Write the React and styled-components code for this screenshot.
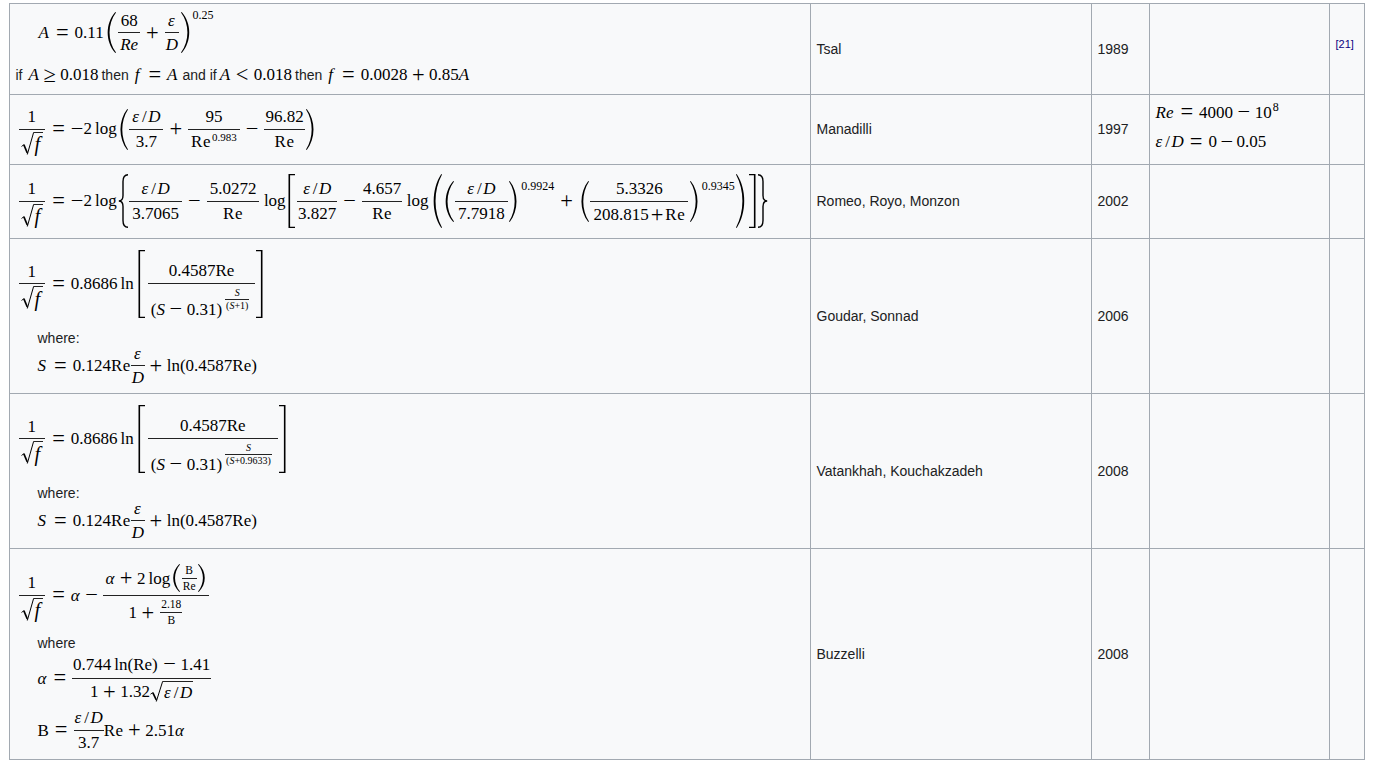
import styled, { createGlobalStyle } from "styled-components";

const GlobalStyle = createGlobalStyle`
  html, body {
    margin: 0;
    padding: 0;
    background: #fff;
    overflow: hidden;
  }
  body {
    font-family: "Liberation Sans", Arial, sans-serif;
    font-size: 14px;
    color: #202122;
  }
`;

const Page = styled.div`
  padding: 3px 9px 0;
  height: 758px;
  overflow: hidden;
`;

const Table = styled.table`
  border-collapse: collapse;
  table-layout: fixed;
  width: 1355px;
  background: #f8f9fa;
`;

const Row = styled.tr`
  height: ${(p) => p.$h}px;
`;

const Cell = styled.td`
  border: 1px solid #a2a9b1;
  padding: 0 5.5px 1px;
  vertical-align: middle;
  line-height: 20px;
  overflow: hidden;
  white-space: nowrap;
`;

const RefLink = styled.sup`
  display: block;
  color: #0b0080;
  font-size: 11px;
  line-height: 12px;
  margin-bottom: 10px;
`;

const Expr = styled.span`
  display: inline-flex;
  align-items: center;
  font-family: "Liberation Serif", "Times New Roman", serif;
  font-size: 17px;
  line-height: 1.15;
  color: #000;
  white-space: nowrap;
  vertical-align: middle;
  margin-left: ${(p) => p.$ml || 0}px;
`;

const Line = styled.div`
  display: flex;
  align-items: center;
  margin-top: ${(p) => p.$mt || 0}px;
  margin-bottom: ${(p) => p.$mb || 0}px;
  margin-left: ${(p) => (p.$indent ? 22 : 0)}px;
`;

const Note = styled.div`
  margin: ${(p) => p.$mt || 0}px 0 0 22px;
  line-height: 16px;
`;

const TextRun = styled.span`
  margin: 0 3px;
  vertical-align: middle;
`;

const V = styled.i`
  font-style: italic;
  margin: 0 ${(p) => p.$mr || 0}px 0 ${(p) => p.$ml || 0}px;
`;

const RootF = styled(V)`
  font-size: 1.2em;
  line-height: 1;
`;

const Roman = styled.span`
  letter-spacing: 0.5px;
`;

const Rel = styled.span`
  font-size: 1.32em;
  line-height: 1;
  margin: 0 ${(p) => p.$m ?? 6}px;
`;

const Bin = styled.span`
  font-size: 1.32em;
  line-height: 1;
  margin: 0 ${(p) => p.$m ?? 4.5}px;
`;

const Slash = styled.span`
  margin: 0 1.5px 0 2px;
`;

const Fn = styled.span`
  margin: 0 ${(p) => p.$mr ?? 1}px 0 ${(p) => p.$ml ?? 3}px;
`;

const FracGrid = styled.span`
  display: inline-grid;
  grid-template-rows: 1fr auto 1fr;
  justify-items: center;
  margin: ${(p) => p.$raise || 0}px ${(p) => p.$m ?? 1.5}px 0;
  font-size: ${(p) => (p.$size ? `${p.$size}px` : "inherit")};
  line-height: ${(p) => (p.$tight ? 1 : "inherit")};
`;

const Num = styled.span`
  display: inline-flex;
  align-items: center;
  align-self: end;
  padding: 0 ${(p) => p.$pad ?? 3}px ${(p) => p.$gap ?? 2}px;
`;

const Den = styled.span`
  display: inline-flex;
  align-items: center;
  align-self: start;
  padding: ${(p) => p.$gap ?? 2}px ${(p) => p.$pad ?? 3}px 0;
`;

const Bar = styled.span`
  justify-self: stretch;
  height: 1px;
  background: #222;
`;

const Sup = styled.span`
  align-self: flex-start;
  font-size: ${(p) => p.$size || 12}px;
  line-height: 1;
  margin: ${(p) => p.$mt || 0}px 0 0 ${(p) => p.$ml || 1}px;
`;

const DelimSvg = styled.svg`
  flex: none;
  display: block;
  margin: 0 ${(p) => p.$m ?? 0}px;
  transform: ${(p) => (p.$flip ? "scaleX(-1)" : "none")};
`;

const RootBody = styled.span`
  display: inline-flex;
  align-items: center;
  border-top: 1px solid #222;
  padding: 1px 1px 0 1px;
`;

const RootWrap = styled.span`
  display: inline-flex;
  align-items: stretch;
`;

// stretchy delimiters
function Delim({ kind, h, w, flip, m }) {
  let d;
  let stroke = false;
  if (kind === "paren") {
    d = `M${w - 0.7} 0C${0.2} ${h * 0.28} ${0.2} ${h * 0.72} ${w - 0.7} ${h}L${w} ${h - 0.5}C${2.4} ${h * 0.7} ${2.4} ${h * 0.3} ${w} 0.5Z`;
  } else if (kind === "bracket") {
    d = `M0.5 0H${w}V1.2H2.1V${h - 1.2}H${w}V${h}H0.5Z`;
  } else {
    stroke = true;
    d = `M${w} 0.7Q${w * 0.5} 0.7 ${w * 0.5} ${h * 0.14}V${h * 0.4}Q${w * 0.5} ${h * 0.5} 0.8 ${h * 0.5}Q${w * 0.5} ${h * 0.5} ${w * 0.5} ${h * 0.6}V${h * 0.86}Q${w * 0.5} ${h - 0.7} ${w} ${h - 0.7}`;
  }
  return (
    <DelimSvg $flip={flip} $m={m} width={w} height={h} viewBox={`0 0 ${w} ${h}`}>
      <path d={d} fill={stroke ? "none" : "#000"} stroke={stroke ? "#000" : "none"} strokeWidth="1.4" />
    </DelimSvg>
  );
}

function Sqrt({ children, h = 23, m }) {
  return (
    <RootWrap>
      <DelimSvg $m={m} width="13" height={h} viewBox={`0 0 13 ${h}`}>
        <path d={`M0.5 ${h * 0.63}L2.8 ${h * 0.55}`} fill="none" stroke="#000" strokeWidth="0.9" />
        <path d={`M2.8 ${h * 0.55}L6.3 ${h - 2}`} fill="none" stroke="#000" strokeWidth="1.7" />
        <path d={`M6.3 ${h - 0.5}L12.6 0.5H13`} fill="none" stroke="#000" strokeWidth="1" />
      </DelimSvg>
      <RootBody>{children}</RootBody>
    </RootWrap>
  );
}

function Frac({ top, bottom, size, m, pad, gap, denGap, raise, tight }) {
  return (
    <FracGrid $size={size} $m={m} $raise={raise} $tight={tight}>
      <Num $pad={pad} $gap={gap}>{top}</Num>
      <Bar />
      <Den $pad={pad} $gap={denGap ?? gap}>{bottom}</Den>
    </FracGrid>
  );
}

const eps = <V $mr={1}>ε</V>;
const epsD = (
  <>
    {eps}
    <Slash>/</Slash>
    <V>D</V>
  </>
);
const Re = <Roman>Re</Roman>;
const Minus = <Bin $m={0}>−</Bin>;

const OneOverRootF = () => (
  <Frac
    pad={2}
    m={1}
    top="1"
    bottom={
      <Sqrt>
        <RootF $mr={2}>f</RootF>
      </Sqrt>
    }
  />
);

const SDefinition = () => (
  <Line $indent $mt={-2}>
    <Expr>
      <V $mr={2}>S</V>
      <Rel>=</Rel>
      0.124{Re}
      <Frac m={0} pad={1} top={eps} bottom={<V>D</V>} />
      <Bin>+</Bin>
      ln(0.4587Re)
    </Expr>
  </Line>
);

function LambertRow({ exponent }) {
  return (
    <>
      <Line $mt={4}>
        <Expr $ml={2}>
          <OneOverRootF />
          <Rel>=</Rel>
          0.8686
          <Fn>ln</Fn>
          <Delim kind="bracket" w={7} h={68} m={3} />
          <Frac
            m={0}
            pad={3}
            gap={3}
            denGap={14}
            top="0.4587Re"
            bottom={
              <>
                (<V>S</V>
                <Bin>−</Bin>
                0.31)
                <Frac
                  m={3}
                  pad={1}
                  gap={1}
                  size={10}
                  raise={-20}
                  tight
                  top={<V>S</V>}
                  bottom={exponent}
                />
              </>
            }
          />
          <Delim kind="bracket" w={7} h={68} flip m={1} />
        </Expr>
      </Line>
      <Note $mt={9}>where:</Note>
      <SDefinition />
    </>
  );
}

function InfoCells({ authors, year, ranges, reference }) {
  return (
    <>
      <Cell>{authors}</Cell>
      <Cell>{year}</Cell>
      <Cell>{ranges}</Cell>
      <Cell>{reference}</Cell>
    </>
  );
}

export default function App() {
  return (
    <Page>
      <GlobalStyle />
      <Table>
        <colgroup>
          <col style={{ width: 801 }} />
          <col style={{ width: 281 }} />
          <col style={{ width: 58 }} />
          <col style={{ width: 180 }} />
          <col style={{ width: 35 }} />
        </colgroup>
        <tbody>
          <Row $h={91}>
            <Cell>
              <Line $indent>
                <Expr>
                  <V $ml={1} $mr={1}>A</V>
                  <Rel>=</Rel>
                  0.11
                  <Delim kind="paren" w={11} h={41} m={1} />
                  <Frac pad={2} top="68" bottom={<V>Re</V>} />
                  <Bin>+</Bin>
                  <Frac pad={1} top={eps} bottom={<V>D</V>} />
                  <Delim kind="paren" w={11} h={41} flip />
                  <Sup $mt={-2}>0.25</Sup>
                </Expr>
              </Line>
              <Line $mt={9}>
                if
                <TextRun />
                <Expr>
                  <V>A</V>
                  <Rel $m={4.5}>≥</Rel>
                  0.018
                </Expr>
                <TextRun>then</TextRun>
                <Expr>
                  <V $ml={3} $mr={3}>f</V>
                  <Rel>=</Rel>
                  <V $mr={2}>A</V>
                </Expr>
                <TextRun>and if</TextRun>
                <Expr>
                  <V>A</V>
                  <Rel $m={5.5}>&lt;</Rel>
                  0.018
                </Expr>
                <TextRun>then</TextRun>
                <Expr>
                  <V $ml={3} $mr={3}>f</V>
                  <Rel>=</Rel>
                  0.0028
                  <Bin>+</Bin>
                  0.85
                  <V>A</V>
                </Expr>
              </Line>
            </Cell>
            <InfoCells authors="Tsal" year="1989" reference={<RefLink>[21]</RefLink>} />
          </Row>

          <Row $h={70}>
            <Cell>
              <Line>
                <Expr $ml={2}>
                  <OneOverRootF />
                  <Rel>=</Rel>
                  {Minus}2
                  <Fn>log</Fn>
                  <Delim kind="paren" w={10} h={41} />
                  <Frac top={epsD} bottom="3.7" />
                  <Bin>+</Bin>
                  <Frac
                    top="95"
                    bottom={
                      <>
                        {Re}
                        <Sup $size={11}>0.983</Sup>
                      </>
                    }
                  />
                  <Bin>−</Bin>
                  <Frac pad={1} top="96.82" bottom={Re} />
                  <Delim kind="paren" w={10} h={41} flip />
                </Expr>
              </Line>
            </Cell>
            <InfoCells
              authors="Manadilli"
              year="1997"
              ranges={
                <>
                  <Line>
                    <Expr>
                      <V $mr={1}>Re</V>
                      <Rel>=</Rel>
                      4000
                      <Bin>−</Bin>
                      10
                      <Sup $ml={0}>8</Sup>
                    </Expr>
                  </Line>
                  <Line $mt={7} $mb={4}>
                    <Expr>
                      {epsD}
                      <Rel>=</Rel>
                      0
                      <Bin $m={3.5}>−</Bin>
                      0.05
                    </Expr>
                  </Line>
                </>
              }
            />
          </Row>

          <Row $h={74}>
            <Cell>
              <Line>
                <Expr $ml={2}>
                  <OneOverRootF />
                  <Rel>=</Rel>
                  {Minus}2
                  <Fn>log</Fn>
                  <Delim kind="brace" w={10} h={54} />
                  <Frac top={epsD} bottom="3.7065" />
                  <Bin>−</Bin>
                  <Frac top="5.0272" bottom={Re} />
                  <Fn>log</Fn>
                  <Delim kind="bracket" w={7} h={54} m={1} />
                  <Frac pad={1} top={epsD} bottom="3.827" />
                  <Bin>−</Bin>
                  <Frac pad={1} top="4.657" bottom={Re} />
                  <Fn>log</Fn>
                  <Delim kind="paren" w={11} h={54} m={1} />
                  <Delim kind="paren" w={11} h={41} />
                  <Frac top={epsD} bottom="7.7918" />
                  <Delim kind="paren" w={10} h={41} flip />
                  <Sup $ml={2} $mt={6}>0.9924</Sup>
                  <Bin $m={6}>+</Bin>
                  <Delim kind="paren" w={10} h={41} />
                  <Frac
                    top="5.3326"
                    bottom={
                      <>
                        208.815
                        <Bin $m={2}>+</Bin>
                        {Re}
                      </>
                    }
                  />
                  <Delim kind="paren" w={10} h={41} flip />
                  <Sup $ml={2} $mt={6}>0.9345</Sup>
                  <Delim kind="paren" w={11} h={54} flip m={1} />
                  <Delim kind="bracket" w={7} h={54} flip m={1} />
                  <Delim kind="brace" w={10} h={54} flip m={1} />
                </Expr>
              </Line>
            </Cell>
            <InfoCells authors="Romeo, Royo, Monzon" year="2002" />
          </Row>

          <Row $h={155}>
            <Cell>
              <LambertRow
                exponent={
                  <>
                    (<V>S</V>+1)
                  </>
                }
              />
            </Cell>
            <InfoCells authors="Goudar, Sonnad" year="2006" />
          </Row>

          <Row $h={155}>
            <Cell>
              <LambertRow
                exponent={
                  <>
                    (<V>S</V>+0.9633)
                  </>
                }
              />
            </Cell>
            <InfoCells authors="Vatankhah, Kouchakzadeh" year="2008" />
          </Row>

          <Row $h={211}>
            <Cell>
              <Line $mt={9}>
                <Expr $ml={2}>
                  <OneOverRootF />
                  <Rel>=</Rel>
                  <V $mr={1}>α</V>
                  <Bin>−</Bin>
                  <Frac
                    pad={2}
                    m={1}
                    top={
                      <>
                        <V $mr={1}>α</V>
                        <Bin>+</Bin>2<Fn>log</Fn>
                        <Delim kind="paren" w={9} h={28} />
                        <Frac size={11.5} gap={1} pad={1} top="B" bottom="Re" />
                        <Delim kind="paren" w={9} h={28} flip />
                      </>
                    }
                    bottom={
                      <>
                        1<Bin>+</Bin>
                        <Frac size={11.5} gap={1} pad={1} top="2.18" bottom="B" />
                      </>
                    }
                  />
                </Expr>
              </Line>
              <Note $mt={8}>where</Note>
              <Line $indent $mt={2}>
                <Expr>
                  <V $mr={1}>α</V>
                  <Rel>=</Rel>
                  <Frac
                    pad={1}
                    m={0}
                    top={
                      <>
                        0.744
                        <Fn>ln(Re)</Fn>
                        <Bin>−</Bin>
                        1.41
                      </>
                    }
                    bottom={
                      <>
                        1<Bin>+</Bin>
                        1.32
                        <Sqrt h={21}>{epsD}</Sqrt>
                      </>
                    }
                  />
                </Expr>
              </Line>
              <Line $indent $mt={5}>
                <Expr>
                  B<Rel>=</Rel>
                  <Frac m={0} pad={1} top={epsD} bottom="3.7" />
                  {Re}
                  <Bin>+</Bin>
                  2.51
                  <V>α</V>
                </Expr>
              </Line>
            </Cell>
            <InfoCells authors="Buzzelli" year="2008" />
          </Row>
        </tbody>
      </Table>
    </Page>
  );
}
